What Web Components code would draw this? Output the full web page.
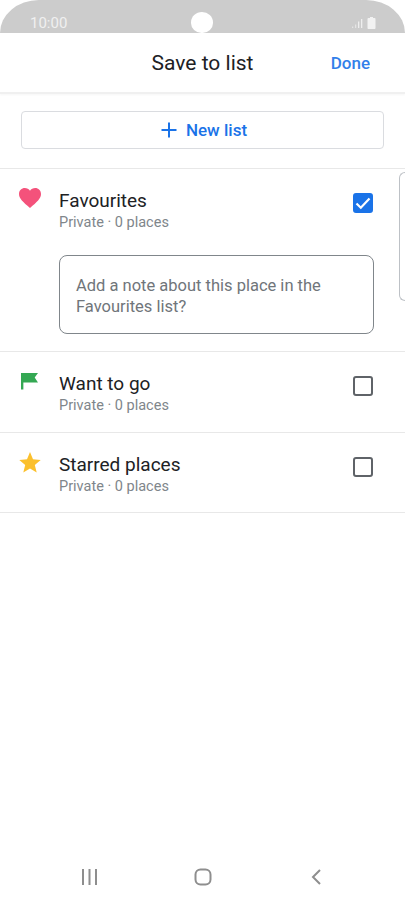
<!DOCTYPE html>
<html lang="en">
  <head>
    <meta charset="UTF-8" />
    <title>Save to list</title>
    <style>
      html, body {
        margin: 0;
        height: 100%;
        background: #fff;
        overflow: hidden;
      }
      body {
        font-family: Roboto, "Liberation Sans", sans-serif;
      }
      #page {
        display: flex;
        flex-direction: column;
        height: 902px;
      }
    </style>
  </head>
  <body>
    <!-- status bar -->
    <template id="status-bar-t">
      <style>
        :host {
          display: flex;
          align-items: center;
          justify-content: space-between;
          position: relative;
          height: 33px;
          padding: 13px 29px 0 30px;
          box-sizing: border-box;
          background: #cccccc;
          border-radius: 40px 40px 0 0 / 34px 34px 0 0;
          color: #f0f0f0;
          font-size: 15px;
        }
        .cam {
          position: absolute;
          left: 191px;
          top: 12px;
          width: 22px;
          height: 21px;
          border-radius: 50% 50% 48% 48%;
          background: #fff;
        }
        .icons {
          display: flex;
          align-items: center;
          gap: 4px;
        }
        svg { display: block; }
      </style>
      <span>10:00</span>
      <div class="cam"></div>
      <div class="icons">
        <svg width="11" height="11" viewBox="0 0 11 11" fill="#eeeeee">
          <rect x="0" y="8.5" width="1.3" height="1.5" opacity=".7"/>
          <rect x="3" y="6.5" width="1.3" height="3.5" opacity=".7"/>
          <rect x="6" y="3.5" width="1.3" height="6.5"/>
          <rect x="9" y="1" width="1.3" height="9"/>
        </svg>
        <svg width="9" height="12" viewBox="0 0 9 12" fill="#f2f2f2">
          <path d="M3 0h3v1h1.6c.6 0 .9.4.9 1v9c0 .6-.4 1-1 1H1.500c-.6 0-1-.4-1-1V2c0-.6.3-1 .9-1H3z"/>
        </svg>
      </div>
    </template>

    <!-- header -->
    <template id="app-header-t">
      <style>
        :host {
          display: grid;
          grid-template-columns: 1fr auto 1fr;
          align-items: center;
          height: 59px;
          padding: 0 35px;
          background: #fff;
          border-bottom: 2px solid #f0f0f0;
          box-shadow: 0 1px 2px rgba(0, 0, 0, .04);
        }
        .title {
          font-size: 21px;
          color: #202124;
        }
        .done {
          justify-self: end;
          font-size: 17px;
          font-weight: 500;
          color: #1a73e8;
          opacity: .9;
        }
      </style>
      <span></span>
      <span class="title"><slot></slot></span>
      <span class="done"><slot name="action"></slot></span>
    </template>

    <!-- new list button -->
    <template id="new-list-button-t">
      <style>
        :host {
          display: flex;
          align-items: center;
          justify-content: center;
          gap: 9px;
          height: 38px;
          margin: 17px 21px 19px;
          padding-left: 3px;
          box-sizing: border-box;
          border: 1px solid #dadce0;
          border-radius: 4px;
          color: #1a73e8;
          font-size: 17px;
          font-weight: 500;
        }
        svg { display: block; }
      </style>
      <svg width="16" height="16" viewBox="0 0 16 16" fill="#1a73e8">
        <path d="M7 .5h2V7h6.500v2H9v6.500H7V9H.5V7H7z"/>
      </svg>
      <span><slot></slot></span>
    </template>

    <!-- one saved list row -->
    <template id="place-row-t">
      <style>
        :host {
          display: grid;
          grid-template-columns: 59px 1fr 31px;
          padding: 0 32px 0 0;
          border-top: 1px solid #e8e8e8;
          height: 80px;
          position: relative;
        }
        :host([open]) { height: 182px; }
        :host([last]) {
          height: 79px;
          border-bottom: 1px solid #e8e8e8;
        }
        .icon {
          display: flex;
          justify-content: center;
          align-items: flex-start;
          padding-top: 18px;
        }
        .body {
          padding-top: 20px;
          min-width: 0;
        }
        .name {
          font-size: 19px;
          line-height: 24px;
          color: #202124;
        }
        .meta {
          font-size: 14.500px;
          line-height: 20px;
          color: #80868b;
        }
        .box {
          width: 20px;
          height: 20px;
          margin-top: 24px;
          box-sizing: border-box;
          border: 2px solid #5f6368;
          border-radius: 3px;
          justify-self: end;
        }
        :host([checked]) .box {
          background: #1a73e8;
          border-color: #1a73e8;
          display: flex;
          align-items: center;
          justify-content: center;
        }
        .box svg { display: none; }
        :host([checked]) .box svg { display: block; }
        ::slotted(note-box) { margin-top: 22px; }
      </style>
      <div class="icon"><slot name="icon"></slot></div>
      <div class="body">
        <div class="name" id="name"></div>
        <div class="meta" id="meta"></div>
        <slot></slot>
      </div>
      <div class="box">
        <svg width="16" height="14" viewBox="0 0 16 14" fill="none" stroke="#fff" stroke-width="2.200">
          <path d="M1.500 7.500l4.300 4.200L14.500 2.500"/>
        </svg>
      </div>
    </template>

    <!-- note field -->
    <template id="note-box-t">
      <style>
        :host {
          display: block;
          width: 315px;
          height: 79px;
          box-sizing: border-box;
          padding: 19px 16px 0 16px;
          border: 1px solid #80868b;
          border-radius: 8px;
          font-size: 16.500px;
          line-height: 21px;
          color: #70757a;
        }
      </style>
      <slot></slot>
    </template>

    <!-- next card, peeking in from the right edge -->
    <template id="peek-card-t">
      <style>
        :host {
          display: block;
          position: absolute;
          right: 0;
          top: 172px;
          width: 6px;
          height: 129px;
          box-sizing: border-box;
          border: 1px solid #bdc1c6;
          border-right: none;
          border-radius: 8px 0 0 8px;
          background: #fff;
        }
      </style>
    </template>

    <!-- android nav bar -->
    <template id="nav-bar-t">
      <style>
        :host {
          display: flex;
          justify-content: space-between;
          align-items: center;
          margin-top: auto;
          height: 52px;
          padding: 2px 84px 0 82px;
          box-sizing: border-box;
        }
        svg { display: block; }
        .home { margin-right: 3px; }
      </style>
      <svg width="15" height="16" viewBox="0 0 15 16" fill="#8e8e8e">
        <rect x="0" y="0" width="2" height="16"/>
        <rect x="6.500" y="0" width="2" height="16"/>
        <rect x="13" y="0" width="2" height="16"/>
      </svg>
      <svg class="home" width="18" height="18" viewBox="0 0 18 18" fill="none" stroke="#8e8e8e" stroke-width="2">
        <rect x="1.500" y="1.500" width="15" height="15" rx="5"/>
      </svg>
      <svg width="10" height="16" viewBox="0 0 10 16" fill="none" stroke="#8e8e8e" stroke-width="2">
        <path d="M9 1L2 8l7 7"/>
      </svg>
    </template>

    <div id="page">
      <status-bar></status-bar>
      <app-header>Save to list<span slot="action">Done</span></app-header>
      <new-list-button>New list</new-list-button>
      <place-row open checked name="Favourites" meta="Private · 0 places">
        <svg slot="icon" width="24" height="22" viewBox="0 0 24 22" fill="#f4527b">
          <path d="M12 21C5 15 1 11.500 1 7c0-3.500 2.600-6 5.800-6C8.900 1 10.900 2 12 3.800 13.100 2 15.100 1 17.200 1 20.400 1 23 3.500 23 7c0 4.500-4 8-11 14z"/>
        </svg>
        <note-box>Add a note about this place in the Favourites list?</note-box>
      </place-row>
      <place-row name="Want to go" meta="Private · 0 places">
        <svg slot="icon" width="17" height="17" viewBox="0 0 18 18" fill="#34a853" style="margin-top: 3px">
          <path d="M0 0h18l-3.500 4.800L18 10H2.500v7.500H0z"/>
        </svg>
      </place-row>
      <place-row last name="Starred places" meta="Private · 0 places">
        <svg slot="icon" width="22" height="21" viewBox="0 0 22 21" fill="#fbc02d" style="margin-top: 1px">
          <path d="M11 0l3 7.300 7.700.6-5.900 5 1.900 7.600L11 16.400l-6.700 4.100 1.900-7.600-5.900-5L8 7.300z"/>
        </svg>
      </place-row>
      <peek-card></peek-card>
      <nav-bar></nav-bar>
    </div>

    <script>
      // shared base: clone the template into an open shadow root
      class TplElement extends HTMLElement {
        constructor() {
          super()
          const template = document.querySelector(`#${this.localName}-t`)
          this.attachShadow({mode: "open"}).appendChild(template.content.cloneNode(true))
        }
      }

      class PlaceRow extends TplElement {
        connectedCallback() {
          this.shadowRoot.querySelector("#name").textContent = this.getAttribute("name")
          this.shadowRoot.querySelector("#meta").textContent = this.getAttribute("meta")
        }
      }

      customElements.define("status-bar", class extends TplElement {})
      customElements.define("app-header", class extends TplElement {})
      customElements.define("new-list-button", class extends TplElement {})
      customElements.define("place-row", PlaceRow)
      customElements.define("note-box", class extends TplElement {})
      customElements.define("peek-card", class extends TplElement {})
      customElements.define("nav-bar", class extends TplElement {})
    </script>
  </body>
</html>
